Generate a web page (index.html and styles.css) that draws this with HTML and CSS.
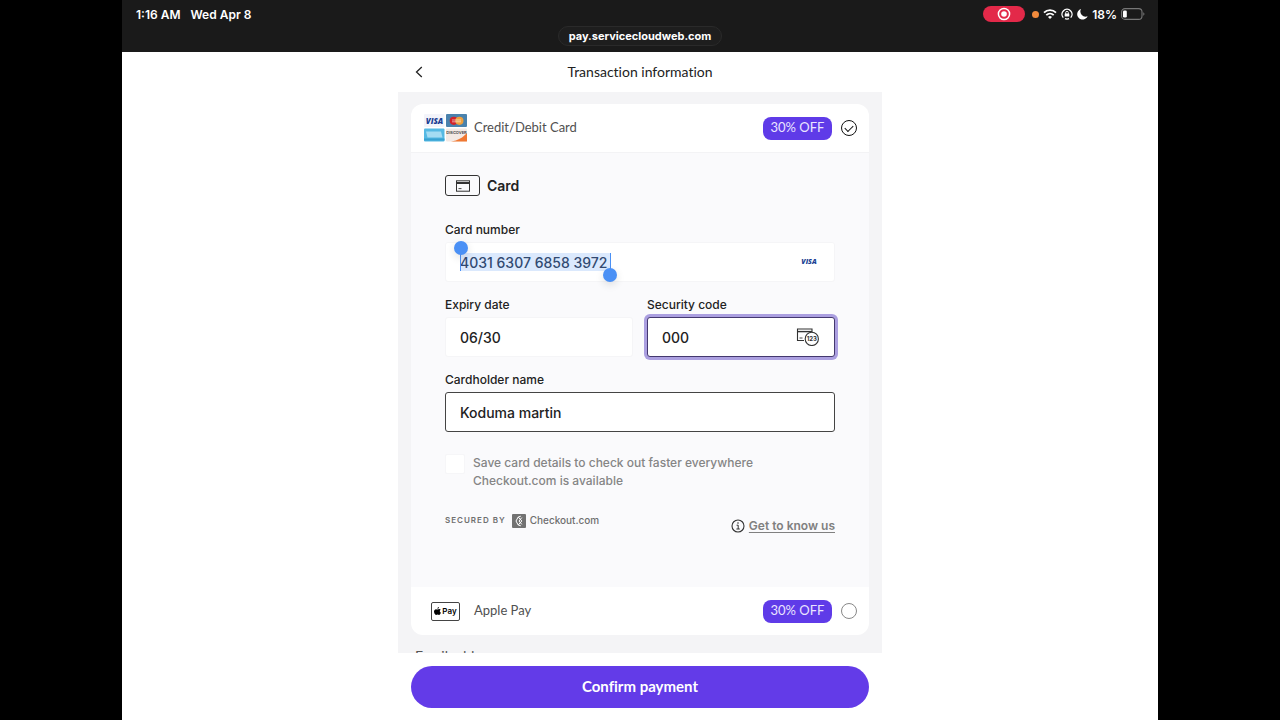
FILE: index.html
```html
<!DOCTYPE html>
<html lang="en">

<head>
  <meta charset="UTF-8" />
  <meta name="viewport" content="width=device-width, initial-scale=1.0" />
  <title>Transaction information</title>
  <link rel="stylesheet" href="styles.css">
</head>

<body>
  <div class="device">
    <!-- Status bar -->
    <div class="statusbar">
      <div class="status-row">
        <div class="status-left">
          <span>1:16 AM</span>
          <span>Wed Apr 8</span>
        </div>
        <div class="status-right">
          <span class="recording">
            <svg width="14" height="14" viewBox="0 0 14 14">
              <circle cx="7" cy="7" r="5.6" fill="none" stroke="#fff" stroke-width="1.5" />
              <circle cx="7" cy="7" r="2.8" fill="#fff" />
            </svg>
          </span>
          <span class="mic-dot"></span>
          <svg width="14" height="12" viewBox="0 0 14 12" fill="none" stroke="#fff" stroke-width="1.8">
            <path d="M1 4.6a8.6 8.6 0 0 1 12 0" />
            <path d="M3.3 7.2a5.3 5.3 0 0 1 7.4 0" />
            <path d="M7 11 5 8.9a3 3 0 0 1 4 0z" fill="#fff" stroke="none" />
          </svg>
          <svg width="12" height="12" viewBox="0 0 12 12" fill="none" stroke="#fff">
            <path d="M2.3 9.6A5 5 0 1 1 9.7 9.6M4 10.7a5 5 0 0 0 4 0" stroke-width="1.4" />
            <rect x="3.7" y="5.4" width="4.6" height="3.2" rx="0.5" fill="#fff" stroke="none" />
            <path d="M4.7 6V4.6a1.3 1.3 0 0 1 2.6 0V6" stroke-width="0.9" />
          </svg>
          <svg width="11" height="12" viewBox="0 0 11 12" fill="#fff">
            <path d="M4 1A5.4 5.4 0 1 0 10.6 8.2 5.2 5.2 0 0 1 4 1z" />
          </svg>
          <span>18%</span>
          <svg width="24" height="12" viewBox="0 0 24 12">
            <rect x="0.6" y="0.6" width="20.4" height="10.8" rx="3.4" fill="none" stroke="#777" stroke-width="1.1" />
            <rect x="2" y="2.4" width="3.8" height="7.2" rx="1.3" fill="#fff" />
            <path d="M22.3 4.2v3.6a2 2 0 0 0 0-3.6z" fill="#777" />
          </svg>
        </div>
      </div>
      <div class="address">pay.servicecloudweb.com</div>
    </div>

    <form class="checkout">
      <header class="topbar">
        <button type="button" class="back" aria-label="Back">
          <svg width="8" height="12" viewBox="0 0 8 12" fill="none" stroke="#222" stroke-width="1.3">
            <path d="M6.8 1 1.5 6l5.3 5" />
          </svg>
        </button>
        <h1>Transaction information</h1>
      </header>

      <main class="content">
        <section class="methods">
          <!-- Credit card -->
          <div class="method">
            <span class="method-icon">
              <svg width="43" height="28" viewBox="0 0 43 28">
                <rect x="0" y="0" width="20.5" height="13" rx="1" fill="#f3f4fa" />
                <text class="visa-text" x="10.5" y="10" text-anchor="middle" font-size="8">VISA</text>
                <rect x="22" y="0" width="21" height="13" rx="1" fill="#4a82ad" />
                <circle cx="29.8" cy="6.8" r="4.1" fill="#d2232a" />
                <circle cx="35.4" cy="6.8" r="4.1" fill="#f0a03c" />
                <path d="M28 6h9M28 7.8h9" stroke="#fff" stroke-width="0.8" opacity="0.7" />
                <rect x="0" y="14.5" width="20.5" height="13" rx="1" fill="#55b9e3" />
                <path d="M2 17.5h15l1.5 6h-15z" fill="#a4dcf3" />
                <path d="M0 25.5h20.5" stroke="#38a2d2" stroke-width="2" />
                <rect x="22" y="14.5" width="21" height="13" rx="1" fill="#f3e9e4" />
                <path d="M43 19v8.5H27c7-1 12-4 16-8.5z" fill="#f07832" />
                <text class="discover-text" x="32.5" y="20" text-anchor="middle" font-size="4">DISCOVER</text>
              </svg>
            </span>
            <label class="method-name" for="payCard">Credit/Debit Card</label>
            <span class="badge">30% OFF</span>
            <input class="radio" type="radio" name="method" id="payCard" checked />
          </div>

          <div class="panel">
            <div class="panel-title">
              <span class="card-box">
                <svg width="14" height="12" viewBox="0 0 14 12" fill="none" stroke="#333">
                  <rect x="0.5" y="0.8" width="13" height="10.4" stroke-width="1" />
                  <path d="M0.5 3h13" stroke-width="1.8" />
                  <path d="M2.5 8.6h3" stroke-width="0.9" />
                </svg>
              </span>
              <h2>Card</h2>
            </div>

            <div class="fields">
              <div class="field">
                <label for="cardNumber">Card number</label>
                <div class="control">
                  <input type="text" id="cardNumber" class="selected-text" value="4031 6307 6858 3972" />
                  <span class="selection"></span>
                  <svg class="suffix" width="18" height="10" viewBox="0 0 18 10">
                    <text class="visa-text" x="8" y="7" text-anchor="middle" font-size="7">VISA</text>
                  </svg>
                </div>
              </div>

              <div class="field-row">
                <div class="field">
                  <label for="expiry">Expiry date</label>
                  <div class="control">
                    <input type="text" id="expiry" value="06/30" />
                  </div>
                </div>
                <div class="field">
                  <label for="cvv">Security code</label>
                  <div class="control outlined focused">
                    <input type="text" id="cvv" value="000" />
                    <svg class="suffix" width="23" height="18" viewBox="0 0 23 18" fill="none" stroke="#333">
                      <path d="M8 12.5H1.5V1H16v4" stroke-width="1.1" />
                      <path d="M1.5 3.6H16" stroke-width="1.4" />
                      <path d="M3.5 10h3" stroke-width="0.9" />
                      <circle cx="15.8" cy="10.9" r="6.6" fill="#fff" stroke-width="1.1" />
                      <text class="cvv-text" x="15.8" y="13" text-anchor="middle" font-size="6">123</text>
                    </svg>
                  </div>
                </div>
              </div>

              <div class="field">
                <label for="holder">Cardholder name</label>
                <div class="control outlined">
                  <input type="text" id="holder" value="Koduma martin" />
                </div>
              </div>
            </div>

            <div class="save">
              <input type="checkbox" id="saveCard" />
              <label for="saveCard">Save card details to check out faster everywhere<br>Checkout.com is available</label>
            </div>

            <div class="panel-footer">
              <div class="secured">
                <span class="secured-by">SECURED BY</span>
                <svg width="14" height="14" viewBox="0 0 14 14">
                  <rect width="14" height="14" rx="1" fill="#727272" />
                  <path d="M8.8 2.2 6.2 3 4 7l2.2 4 2.6.8M6.2 3l3.6 4-3.6 4M9.8 3.6 7 7l2.8 3.4" fill="none" stroke="#fff" stroke-width="1" />
                </svg>
                <span class="brand">Checkout.com</span>
              </div>
              <div class="know">
                <svg width="14" height="14" viewBox="0 0 14 14" fill="none" stroke="#333">
                  <circle cx="7" cy="7" r="6" stroke-width="1.1" />
                  <path d="M5.6 6.2H7.2V10M5.4 10h3.4" stroke-width="1" />
                  <circle cx="7" cy="4" r="0.8" fill="#333" stroke="none" />
                </svg>
                <a href="#">Get to know us</a>
              </div>
            </div>
          </div>

          <!-- Apple Pay -->
          <div class="method">
            <span class="method-icon">
              <span class="apple-box">
                <svg width="7" height="8" viewBox="0 0 14 16" fill="#000">
                  <path d="M10 0c.1 1.9-1.3 3.6-3.2 3.7C6.7 1.9 8.2.2 10 0zM13.3 5.6c-2.5 1.5-2.2 4.6.5 5.7-.8 2.3-2.2 4.6-3.7 4.6-1.2 0-1.6-.7-3-.7s-1.9.7-3 .7C1.9 15.9 0 12 0 9.2c0-3 1.9-4.9 4-4.9 1.3 0 2.3.8 3.2.8.8 0 2-.9 3.6-.9 1 0 2 .5 2.5 1.4z" />
                </svg>
                <span>Pay</span>
              </span>
            </span>
            <label class="method-name" for="payApple">Apple Pay</label>
            <span class="badge">30% OFF</span>
            <input class="radio" type="radio" name="method" id="payApple" />
          </div>
        </section>

        <h3>Email address</h3>
      </main>

      <footer class="actions">
        <button type="submit" class="confirm">Confirm payment</button>
      </footer>
    </form>
  </div>
</body>

</html>
```
FILE: styles.css
```css
* {
  box-sizing: border-box;
}

body {
  margin: 0;
  padding: 0 122px;
  background-color: #000;
  color: #222;
  font-family: Inter, sans-serif;
}

svg {
  display: block;
  flex: none;
}

.device {
  display: flex;
  flex-direction: column;
  height: 100vh;
  background-color: #fff;
}

/* Status bar */
.statusbar {
  display: flex;
  flex-direction: column;
  align-items: center;
  height: 52px;
  padding-top: 5px;
  gap: 3px;
  background-color: #1a1a1a;
  color: #fff;
  font-size: 12px;
  font-weight: 600;
}

.status-row {
  display: flex;
  justify-content: space-between;
  width: 100%;
  height: 18px;
  padding: 0 13px 0 14px;
}

.status-left,
.status-right {
  display: flex;
  align-items: center;
}

.status-left {
  gap: 10px;
}

.status-right {
  gap: 4px;
}

.recording {
  display: flex;
  align-items: center;
  justify-content: center;
  width: 42px;
  height: 16px;
  margin-right: 3px;
  border-radius: 8px;
  background-color: #e32949;
}

.mic-dot {
  width: 7px;
  height: 7px;
  border-radius: 50%;
  background-color: #f08a3c;
}

.address {
  height: 20px;
  padding: 0 10px;
  border: 1px solid #2a2a2a;
  border-radius: 10px;
  background-color: #1e1e1e;
  font-size: 11px;
  font-weight: 700;
  line-height: 18px;
}

/* Checkout */
.checkout {
  display: flex;
  flex: 1;
  flex-direction: column;
  width: 100%;
  max-width: 484px;
  min-height: 0;
  margin: 0 auto;
}

.topbar {
  display: grid;
  grid-template-columns: 42px 1fr 42px;
  align-items: center;
  height: 40px;
}

.back {
  display: flex;
  justify-content: center;
  padding: 0;
  border: 0;
  background: none;
}

h1 {
  margin: 0;
  padding-bottom: 2px;
  font-family: Lato, sans-serif;
  font-size: 14px;
  font-weight: 400;
  font-variant-ligatures: none;
  text-align: center;
}

.content {
  flex: 1;
  min-height: 0;
  padding: 12px 13px 0;
  overflow: hidden;
  background-color: #f4f4f6;
}

.methods {
  border-radius: 12px;
  background-color: #fff;
  overflow: hidden;
}

.method {
  display: flex;
  align-items: center;
  height: 48px;
  padding: 0 12px 0 13px;
  font-family: Lato, sans-serif;
}

.method-icon {
  display: flex;
  justify-content: center;
  width: 43px;
  margin-right: 7px;
}

.method-name {
  flex: 1;
  padding-bottom: 2px;
  color: #505050;
  font-size: 13px;
}

.badge {
  width: 69px;
  height: 23px;
  margin-right: 9px;
  border-radius: 8px;
  background-color: #5f3be8;
  color: #eae4ff;
  font-size: 13px;
  line-height: 21px;
  text-align: center;
}

.radio {
  display: flex;
  align-items: center;
  justify-content: center;
  appearance: none;
  width: 16px;
  height: 16px;
  margin: 0;
  border: 1px solid #888;
  border-radius: 50%;
}

.radio:checked {
  border-color: #111;
}

.radio:checked::before {
  content: "";
  width: 7px;
  height: 4px;
  margin-bottom: 2px;
  border-bottom: 1px solid #111;
  border-left: 1px solid #111;
  transform: rotate(-45deg);
}

.visa-text {
  fill: #1a3f94;
  font-family: "Open Sans", sans-serif;
  font-style: italic;
  font-weight: 800;
}

.discover-text {
  fill: #444;
  font-family: Inter, sans-serif;
  font-weight: 600;
}

.cvv-text {
  fill: #333;
  stroke: none;
  font-family: Inter, sans-serif;
  font-weight: 700;
}

/* Card form */
.panel {
  padding: 22px 34px 52px;
  border-top: 1px solid #f3f3f5;
  background-color: #fafafc;
}

.panel-title {
  display: flex;
  align-items: center;
  gap: 7px;
  margin-bottom: 25px;
}

.card-box {
  display: flex;
  align-items: center;
  justify-content: center;
  width: 35px;
  height: 21px;
  border: 1px solid #333;
  border-radius: 3px;
}

h2 {
  margin: 0;
  font-size: 14px;
  font-weight: 600;
  line-height: 21px;
}

.fields {
  display: flex;
  flex-direction: column;
  gap: 14px;
}

.field-row {
  display: grid;
  grid-template-columns: 1fr 1fr;
  gap: 14px;
}

.field label {
  display: block;
  margin-bottom: 3px;
  font-size: 12px;
  font-weight: 500;
  line-height: 18px;
}

.control {
  position: relative;
  display: flex;
  align-items: center;
  height: 40px;
  padding: 0 15px 0 14px;
  border: 1px solid #f5f5f7;
  border-radius: 3px;
  background-color: #fff;
}

.control.outlined {
  border-color: #444;
}

.control.focused {
  border-color: #44386f;
  box-shadow: 0 0 0 3px #ab9fe0;
}

.control input {
  flex: 1;
  width: 0;
  padding: 0;
  border: 0;
  outline: 0;
  background: none;
  color: #222;
  font-family: Inter, sans-serif;
  font-size: 14px;
  font-weight: 500;
}

.control .selected-text {
  color: #2c3850;
}

/* Text selection with drag handles */
.selection {
  position: absolute;
  top: 10px;
  left: 14px;
  width: 151px;
  height: 18px;
  border: solid #4a90f5;
  border-width: 0 1px;
  background-color: rgba(74, 144, 245, 0.2);
}

.selection::before,
.selection::after {
  content: "";
  position: absolute;
  width: 14px;
  height: 14px;
  border-radius: 50%;
  background-color: #4a90f5;
  box-shadow: 0 3px 8px rgba(0, 0, 0, 0.12);
}

.selection::before {
  top: -12px;
  left: -7px;
}

.selection::after {
  right: -7px;
  bottom: -11px;
}

.save {
  display: flex;
  align-items: flex-start;
  gap: 8px;
  margin-top: 22px;
}

.save input {
  appearance: none;
  width: 20px;
  height: 20px;
  margin: 0;
  border: 1px solid #f6f6f8;
  border-radius: 2px;
  background-color: #fff;
}

.save label {
  color: #858585;
  font-size: 12px;
  font-weight: 500;
  line-height: 18px;
}

.panel-footer {
  display: flex;
  justify-content: space-between;
  height: 22px;
  margin-top: 23px;
  color: #6f6f6f;
}

.secured {
  display: flex;
  align-items: center;
  align-self: flex-start;
  gap: 4px;
  line-height: 15px;
}

.secured-by {
  margin-right: 2px;
  font-size: 8px;
  font-weight: 600;
  letter-spacing: 1px;
}

.brand {
  font-size: 10px;
  font-weight: 500;
}

.know {
  display: flex;
  align-items: center;
  align-self: flex-end;
  gap: 4px;
  font-size: 12px;
  font-weight: 600;
  line-height: 18px;
}

.know a {
  color: #808080;
  text-underline-offset: 2px;
}

.apple-box {
  display: flex;
  align-items: center;
  justify-content: center;
  gap: 1px;
  width: 29px;
  height: 19px;
  border: 1px solid #444;
  border-radius: 2px;
  color: #000;
  font-family: Inter, sans-serif;
  font-size: 8px;
  font-weight: 600;
}

h3 {
  margin: 11px 4px;
  color: #555;
  font-family: Lato, sans-serif;
  font-size: 14px;
  font-weight: 400;
  line-height: 20px;
}

.actions {
  padding: 13px 13px 12px;
}

.confirm {
  width: 100%;
  height: 42px;
  padding: 0 0 2px;
  border: 0;
  border-radius: 21px;
  background-color: #633be8;
  color: #fff;
  font-family: Lato, sans-serif;
  font-size: 15px;
  font-weight: 700;
  font-variant-ligatures: none;
}
```
